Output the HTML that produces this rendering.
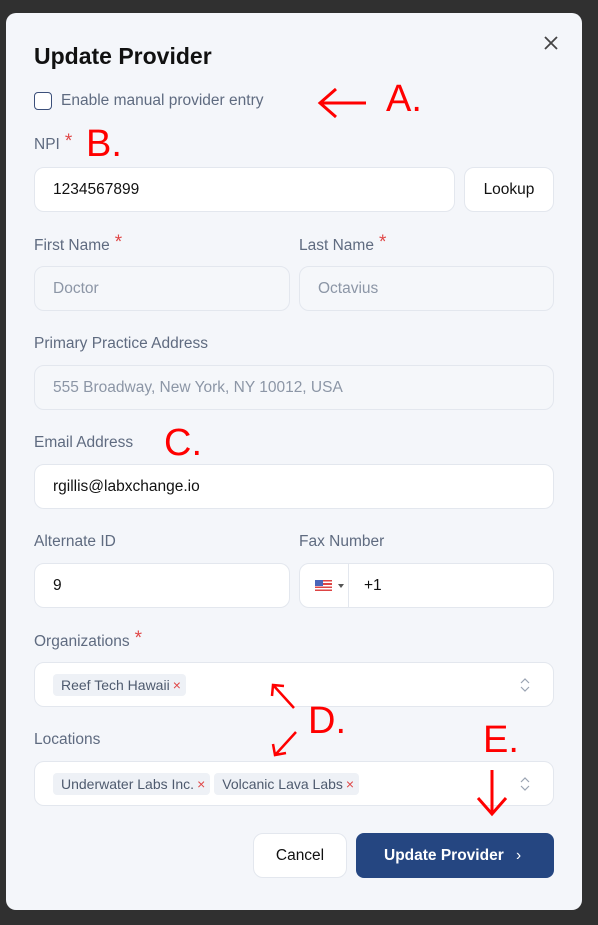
<!DOCTYPE html><html><head><style>
*{box-sizing:border-box;margin:0;padding:0}
body{width:598px;height:925px;background:#303030;font-family:"Liberation Sans",sans-serif;position:relative;overflow:hidden}
.m{position:absolute;left:6px;top:13px;width:576px;height:897px;background:#f4f6fa;border-radius:10px}
.a{position:absolute}
.lab{position:absolute;font-size:15.5px;color:#5f6b80;line-height:18px}
.req{color:#e04848;font-size:19px;position:relative;top:-2px;margin-left:5px}
.in{position:absolute;height:45px;background:#fff;border:1px solid #e3e7ee;border-radius:10px;font-size:15.5px;color:#111;padding-left:18px;line-height:43px}
.dis{background:#f5f7fa;color:#8c96a6}
.tag{display:inline-block;background:#eef1f6;border-radius:4px;padding:0 5px 0 8px;height:22px;line-height:22px;font-size:14px;color:#4e5a6e;margin-right:4px;vertical-align:middle}
.tag b{color:#e04848;font-weight:normal;margin-left:3px}
.red{position:absolute;color:#f00;font-size:38px;line-height:38px}
</style></head><body>
<div class="m"></div>
<div class="a" style="left:34px;top:43px;font-size:23px;font-weight:bold;color:#111">Update Provider</div>
<svg class="a" style="left:544px;top:36px" width="14" height="14"><path d="M1 1L13 13M13 1L1 13" stroke="#444" stroke-width="1.8"/></svg>
<div class="a" style="left:34px;top:92px;width:18px;height:18px;border:1.5px solid #3b4f7a;border-radius:4px;background:#fff"></div>
<div class="lab" style="left:61px;top:92px">Enable manual provider entry</div>
<svg class="a" style="left:316px;top:86px" width="52" height="34"><path d="M50 17H6M20 3L4 17L20 31" stroke="#f00" stroke-width="3" fill="none"/></svg>
<div class="red" style="left:386px;top:80px">A.</div>
<div class="lab" style="left:34px;top:135px">NPI<span class="req">*</span></div>
<div class="red" style="left:86px;top:125px">B.</div>
<div class="in" style="left:34px;top:167px;width:421px">1234567899</div>
<div class="in" style="left:464px;top:167px;width:90px;padding:0;text-align:center">Lookup</div>
<div class="lab" style="left:34px;top:236px">First Name<span class="req">*</span></div>
<div class="lab" style="left:299px;top:236px">Last Name<span class="req">*</span></div>
<div class="in dis" style="left:34px;top:266px;width:256px">Doctor</div>
<div class="in dis" style="left:299px;top:266px;width:255px">Octavius</div>
<div class="lab" style="left:34px;top:335px">Primary Practice Address</div>
<div class="in dis" style="left:34px;top:365px;width:520px">555 Broadway, New York, NY 10012, USA</div>
<div class="lab" style="left:34px;top:434px">Email Address</div>
<div class="red" style="left:164px;top:424px">C.</div>
<div class="in" style="left:34px;top:464px;width:520px">rgillis@labxchange.io</div>
<div class="lab" style="left:34px;top:533px">Alternate ID</div>
<div class="lab" style="left:299px;top:533px">Fax Number</div>
<div class="in" style="left:34px;top:563px;width:256px">9</div>
<div class="in" style="left:299px;top:563px;width:255px;padding-left:64px">+1</div>
<div class="a" style="left:348px;top:564px;width:1px;height:43px;background:#e3e7ee"></div>
<div class="a" style="left:315px;top:580px;width:17px;height:11px;background:repeating-linear-gradient(#d44 0 1.6px,#fff 1.6px 3.2px)"></div>
<div class="a" style="left:315px;top:580px;width:8px;height:6px;background:#4a64b8"></div>
<div class="a" style="left:338px;top:584px;border:3px solid transparent;border-top:4px solid #555"></div>
<div class="lab" style="left:34px;top:632px">Organizations<span class="req">*</span></div>
<div class="in" style="left:34px;top:662px;width:520px;padding-left:18px"><span class="tag">Reef Tech Hawaii<b>×</b></span></div>
<div class="lab" style="left:34px;top:731px">Locations</div>
<div class="in" style="left:34px;top:761px;width:520px;padding-left:18px"><span class="tag">Underwater Labs Inc.<b>×</b></span><span class="tag">Volcanic Lava Labs<b>×</b></span></div>
<svg class="a" style="left:519px;top:676px" width="12" height="18"><path d="M2 7L6 3L10 7M2 11L6 15L10 11" stroke="#9aa3b2" stroke-width="1.2" fill="none"/></svg>
<svg class="a" style="left:519px;top:775px" width="12" height="18"><path d="M2 7L6 3L10 7M2 11L6 15L10 11" stroke="#9aa3b2" stroke-width="1.2" fill="none"/></svg>
<svg class="a" style="left:268px;top:682px;overflow:visible" width="90" height="80"><path d="M26 26L6 4M4 14L5 3L16 4" stroke="#f00" stroke-width="2.5" fill="none"/><path d="M28 50L8 72M5 62L7 73L18 71" stroke="#f00" stroke-width="2.5" fill="none"/></svg>
<div class="red" style="left:308px;top:702px">D.</div>
<div class="red" style="left:483px;top:721px">E.</div>
<svg class="a" style="left:474px;top:768px" width="36" height="50"><path d="M18 2V46M4 30L18 46L32 30" stroke="#f00" stroke-width="3" fill="none"/></svg>
<div class="in" style="left:253px;top:833px;width:94px;padding:0;text-align:center">Cancel</div>
<div class="a" style="left:356px;top:833px;width:198px;height:45px;background:#254681;border-radius:8px;color:#fff;font-size:15.5px;font-weight:bold;line-height:45px;padding-left:28px">Update Provider <span style="margin-left:8px;font-weight:normal">›</span></div>
</body></html>
